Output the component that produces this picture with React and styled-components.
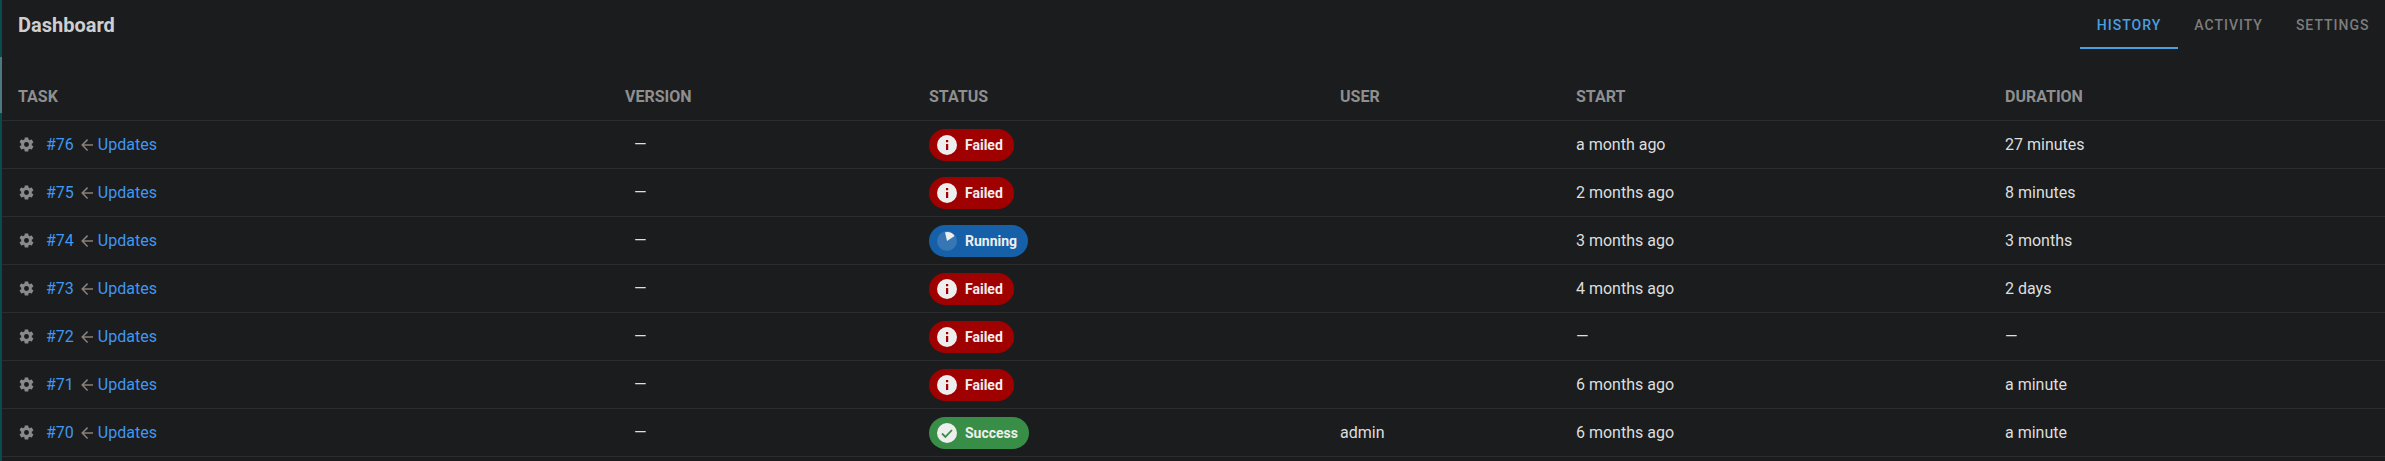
import React from 'react';
import styled, { createGlobalStyle } from 'styled-components';

const COLS = '607px 304px 411px 236px 429px 1fr';

const rows = [
  { id: 76, status: 'failed', start: 'a month ago', duration: '27 minutes' },
  { id: 75, status: 'failed', start: '2 months ago', duration: '8 minutes' },
  { id: 74, status: 'running', start: '3 months ago', duration: '3 months' },
  { id: 73, status: 'failed', start: '4 months ago', duration: '2 days' },
  { id: 72, status: 'failed', start: '—', duration: '—' },
  { id: 71, status: 'failed', start: '6 months ago', duration: 'a minute' },
  { id: 70, status: 'success', user: 'admin', start: '6 months ago', duration: 'a minute' },
];

const chipColors = { failed: '#9f0000', running: '#1560a8', success: '#388e46' };
const chipLabels = { failed: 'Failed', running: 'Running', success: 'Success' };

function StatusIcon({ status }) {
  if (status === 'failed') {
    return (
      <svg width="24" height="24" viewBox="0 0 24 24">
        <circle cx="12" cy="12" r="10" fill="#eeeeee" />
        <path d="M11 7h2.2v2.2H11zM11 11h2.2v6H11z" fill="#9f0000" />
      </svg>
    );
  }
  if (status === 'success') {
    return (
      <svg width="24" height="24" viewBox="0 0 24 24">
        <circle cx="12" cy="12" r="10" fill="#eeeeee" />
        <path d="M7 12.5l3.4 3.4L17 9" fill="none" stroke="#388e46" strokeWidth="1.8" />
      </svg>
    );
  }
  return (
    <svg width="24" height="24" viewBox="0 0 24 24">
      <circle cx="12" cy="12" r="10" fill="#ffffff" fillOpacity="0.14" />
      <path d="M12 12L10 3.2A9 9 0 0 1 19.6 7z" fill="#eeeeee" />
    </svg>
  );
}

export default function App() {
  return (
    <>
      <GlobalStyle />
      <SDPage>
        <SDRail>
          <SDRailMark />
        </SDRail>
        <SDMain>
          <SDToolbar>
            <SDTitle>Dashboard</SDTitle>
            <SDTabs>
              <SDTab $active>History</SDTab>
              <SDTab>Activity</SDTab>
              <SDTab>Settings</SDTab>
            </SDTabs>
          </SDToolbar>
          <SDHeadRow>
            <span>Task</span>
            <span>Version</span>
            <span>Status</span>
            <span>User</span>
            <span>Start</span>
            <span>Duration</span>
          </SDHeadRow>
          {rows.map((row) => (
            <SDRow key={row.id}>
              <SDTask>
                <SDCog width="17" height="17" viewBox="0 0 24 24">
                  <path d="M12 15.5A3.5 3.5 0 0 1 8.5 12 3.5 3.5 0 0 1 12 8.5a3.5 3.5 0 0 1 3.5 3.5 3.5 3.5 0 0 1-3.5 3.5m7.43-2.53c.04-.32.07-.64.07-.97s-.03-.66-.07-1l2.11-1.63c.19-.15.24-.42.12-.64l-2-3.46c-.12-.22-.39-.31-.61-.22l-2.49 1c-.52-.39-1.06-.73-1.69-.98l-.37-2.65A.506.506 0 0 0 14 2h-4c-.25 0-.46.18-.5.42l-.37 2.65c-.63.25-1.17.59-1.69.98l-2.49-1c-.22-.09-.49 0-.61-.22l-2 3.46c-.13.22-.07.49.12.64L4.57 11c-.04.34-.07.67-.07 1s.03.65.07.97l-2.11 1.66c-.19.15-.25.42-.12.64l2 3.46c.12.22.39.3.61.22l2.49-1.01c.52.4 1.06.74 1.69.99l.37 2.65c.04.24.25.42.5.42h4c.25 0 .46-.18.5-.42l.37-2.65c.63-.26 1.17-.59 1.69-.99l2.49 1.01c.22.08.49 0 .61-.22l2-3.46c.12-.22.07-.49-.12-.64z" />
                </SDCog>
                <SDLink>#{row.id}</SDLink>
                <SDArrow width="18" height="18" viewBox="0 0 24 24">
                  <path d="M20 11v2H8l5.5 5.5-1.42 1.42L4.16 12l7.92-7.92L13.5 5.5 8 11z" />
                </SDArrow>
                <SDLink>Updates</SDLink>
              </SDTask>
              <SDVersion>—</SDVersion>
              <div>
                <SDChip $status={row.status}>
                  <StatusIcon status={row.status} />
                  <span>{chipLabels[row.status]}</span>
                </SDChip>
              </div>
              <span>{row.user}</span>
              <span>{row.start}</span>
              <span>{row.duration}</span>
            </SDRow>
          ))}
        </SDMain>
      </SDPage>
    </>
  );
}

const GlobalStyle = createGlobalStyle`
  html, body {
    margin: 0;
    background: #1a1c1e;
    overflow: hidden;
  }
`;

const SDPage = styled.div`
  display: flex;
  width: 2385px;
  height: 461px;
  background: #1a1c1e;
  font-family: Roboto, 'Liberation Sans', sans-serif;
  font-size: 16px;
  color: #dedede;
`;

const SDRail = styled.div`
  flex: 0 0 2px;
  padding-top: 57px;
  background: #0b4a50;
`;

const SDRailMark = styled.div`
  height: 56px;
  background: #4d7a7e;
`;

const SDMain = styled.div`
  flex: 1;
  min-width: 0;
`;

const SDToolbar = styled.div`
  display: flex;
  justify-content: space-between;
  height: 49px;
  padding-left: 16px;
`;

const SDTitle = styled.div`
  padding-top: 13px;
  font-size: 20px;
  line-height: 24px;
  font-weight: 700;
  color: #cfcfcf;
`;

const SDTabs = styled.div`
  display: flex;
  margin-right: -1px;
`;

const SDTab = styled.div`
  display: flex;
  align-items: center;
  height: 49px;
  padding: 2px 16.5px 0;
  box-sizing: border-box;
  border-bottom: 2px solid ${(p) => (p.$active ? '#4a9fe0' : 'transparent')};
  font-size: 14px;
  font-weight: 500;
  letter-spacing: 1px;
  text-transform: uppercase;
  color: ${(p) => (p.$active ? '#4a9fe0' : '#7d7d7d')};
`;

const SDHeadRow = styled.div`
  display: grid;
  grid-template-columns: ${COLS};
  align-items: center;
  height: 72px;
  padding: 23px 0 0 16px;
  box-sizing: border-box;
  border-bottom: 1px solid #2a2c2e;
  font-size: 16px;
  font-weight: 700;
  text-transform: uppercase;
  color: #8f8f8f;
`;

const SDRow = styled.div`
  display: grid;
  grid-template-columns: ${COLS};
  align-items: center;
  height: 48px;
  padding-left: 16px;
  box-sizing: border-box;
  border-bottom: 1px solid #2a2c2e;
`;

const SDTask = styled.div`
  display: flex;
  align-items: center;
`;

const SDCog = styled.svg`
  fill: #8a8a8a;
  margin-right: 11px;
`;

const SDArrow = styled.svg`
  fill: #8a8078;
  margin: 0 2px 0 4px;
`;

const SDLink = styled.a`
  color: #4098f0;
`;

const SDVersion = styled.span`
  padding-left: 9px;
`;

const SDChip = styled.div`
  display: inline-flex;
  align-items: center;
  height: 32px;
  padding: 0 11px 0 6px;
  gap: 6px;
  border-radius: 16px;
  background: ${(p) => chipColors[p.$status]};
  font-size: 14px;
  font-weight: 700;
  color: #eeeeee;
`;
